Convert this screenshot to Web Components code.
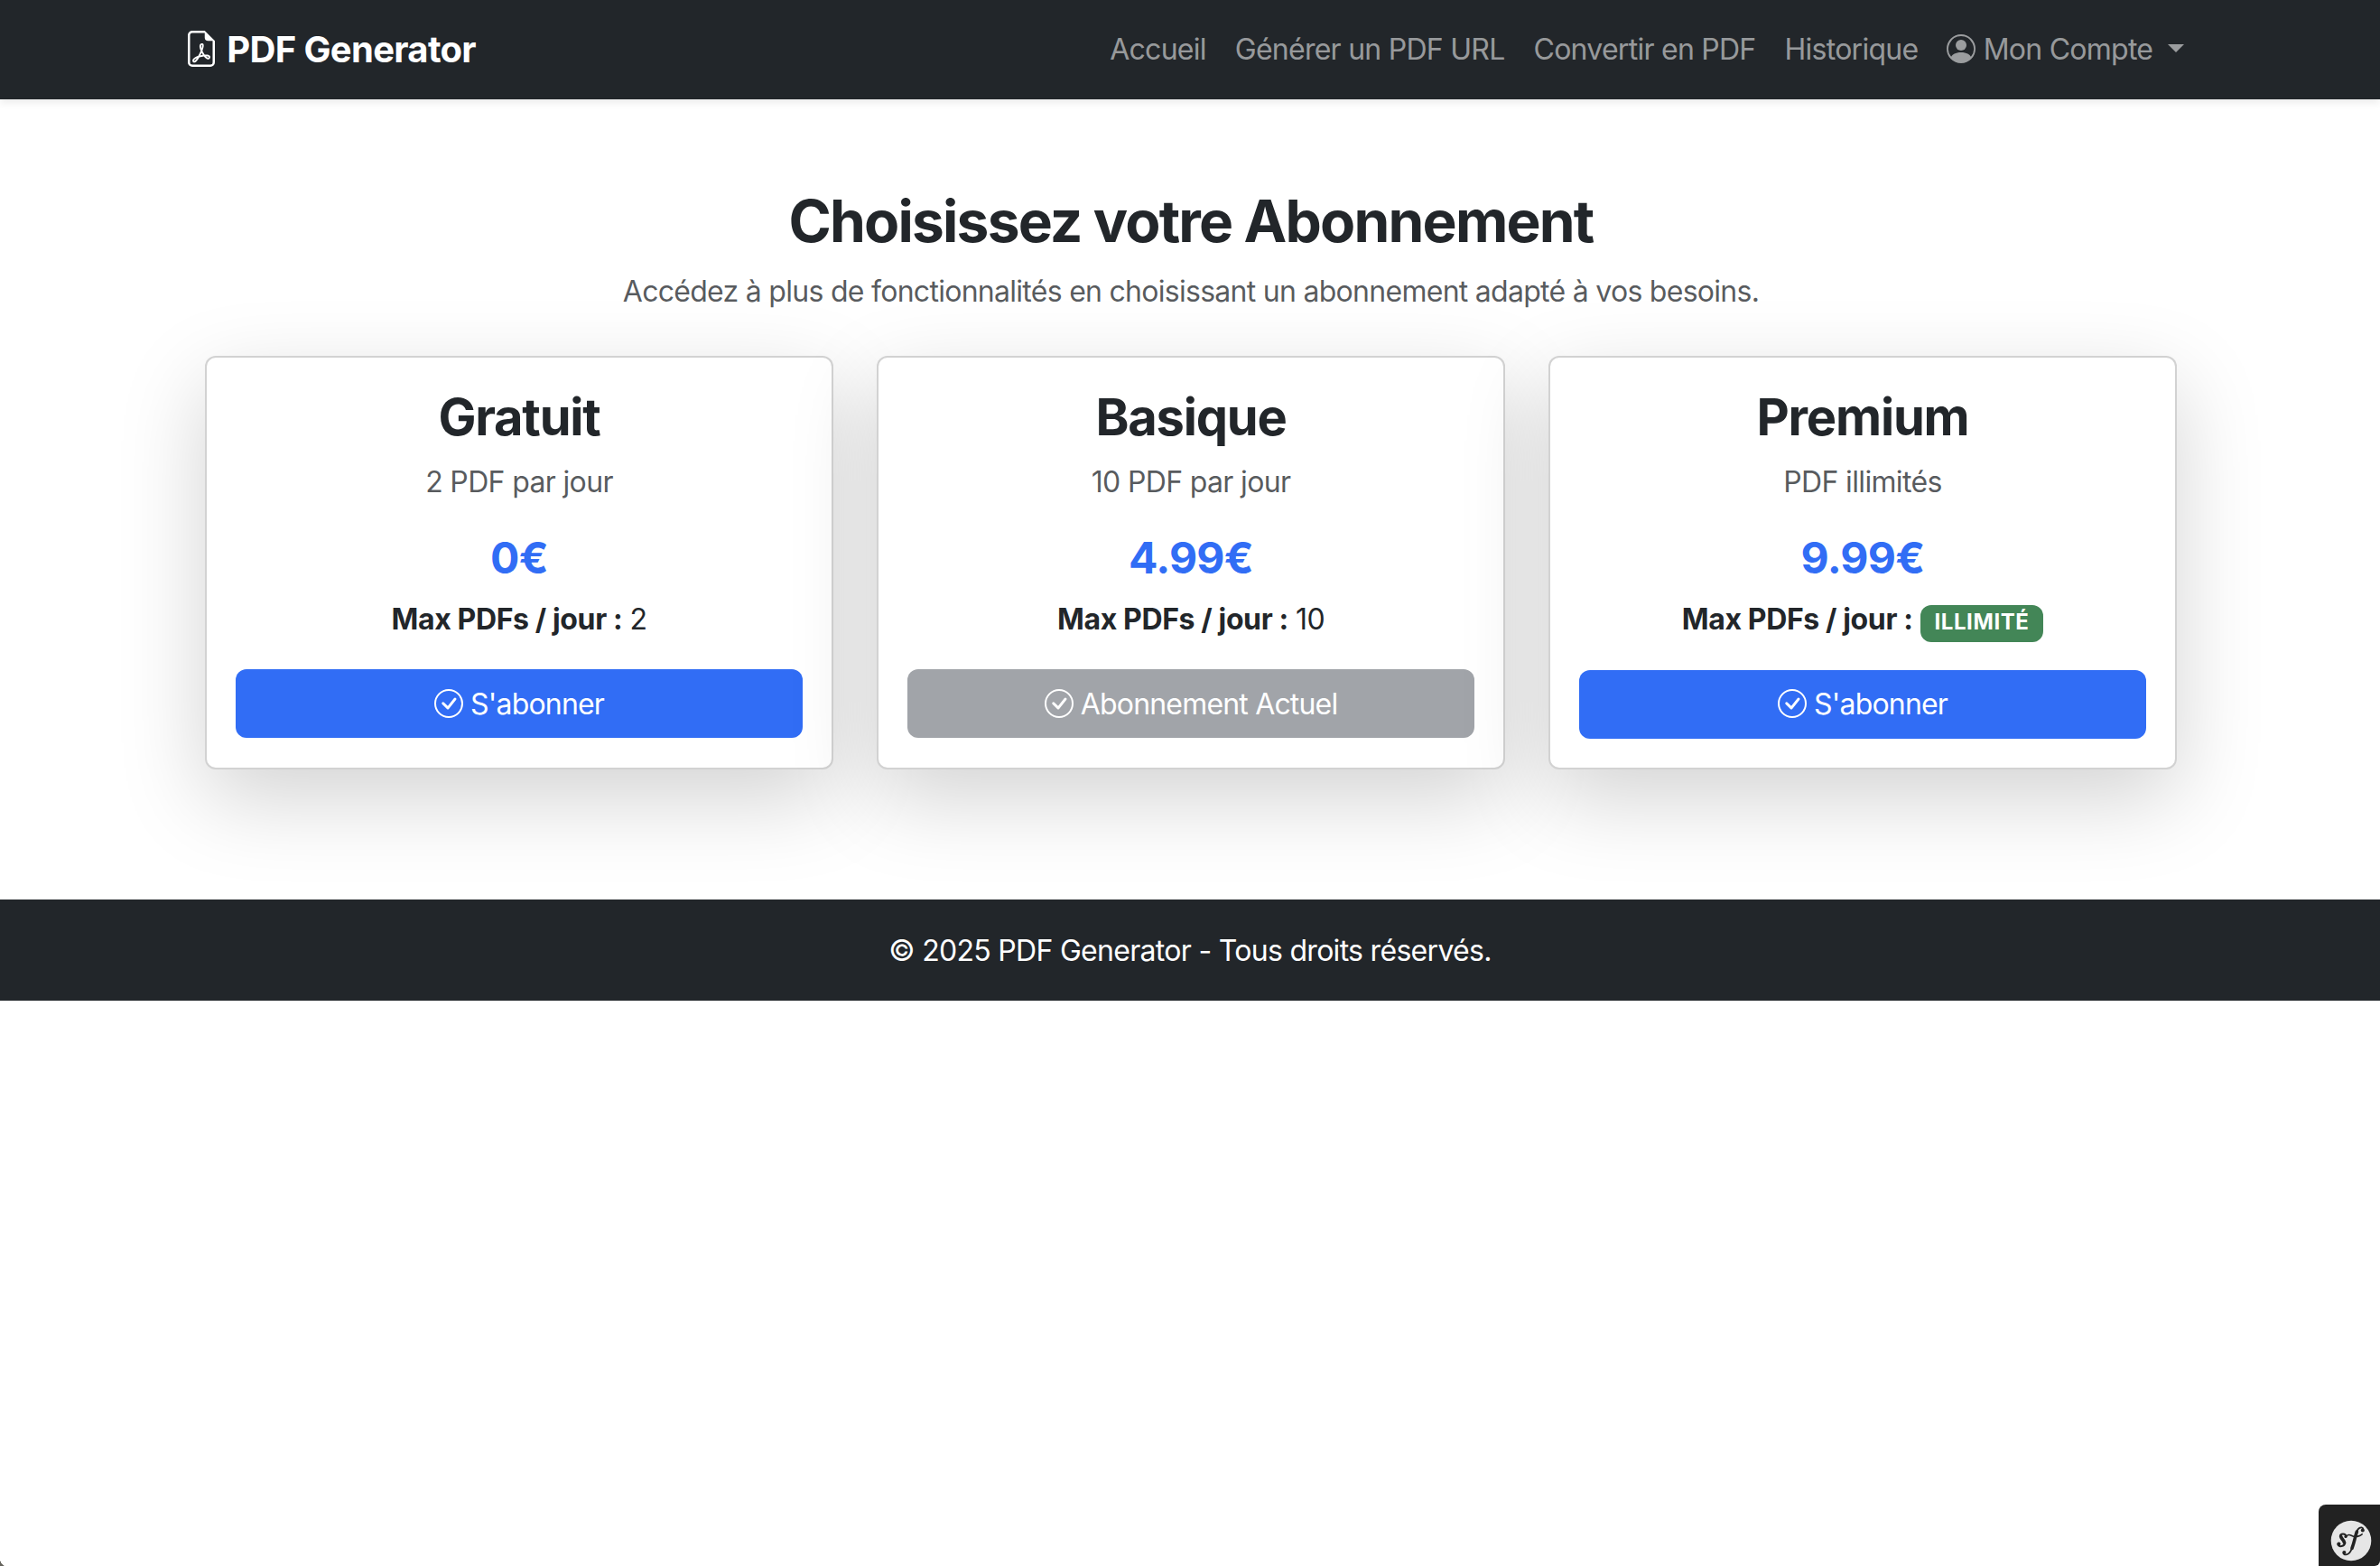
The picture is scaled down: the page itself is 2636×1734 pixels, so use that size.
<!DOCTYPE html>
<html lang="fr">
<head>
<meta charset="utf-8">
<title>PDF Generator - Abonnements</title>
<style>
	body {
		margin: 0;
		background: #fff;
		color: #22262a;
		font-family: Inter, "Liberation Sans", sans-serif;
		font-size: 32px;
		line-height: 1.5;
		letter-spacing: -0.72px;
	}
</style>
</head>
<body>

<app-navbar>
	<span slot="brand">PDF Generator</span>
	<nav-link>Accueil</nav-link>
	<nav-link>Générer un PDF URL</nav-link>
	<nav-link>Convertir en PDF</nav-link>
	<nav-link>Historique</nav-link>
	<nav-link icon="person-circle" dropdown>Mon Compte</nav-link>
</app-navbar>

<plan-section>
	<span slot="title">Choisissez votre Abonnement</span>
	<span slot="lead">Accédez à plus de fonctionnalités en choisissant un abonnement adapté à vos besoins.</span>

	<plan-card name="Gratuit" price="0€">
		<span slot="description">2 PDF par jour</span>
		<span slot="quota">2</span>
		<plan-button slot="action">S'abonner</plan-button>
	</plan-card>
	<plan-card name="Basique" price="4.99€">
		<span slot="description">10 PDF par jour</span>
		<span slot="quota">10</span>
		<plan-button slot="action" disabled>Abonnement Actuel</plan-button>
	</plan-card>
	<plan-card name="Premium" price="9.99€">
		<span slot="description">PDF illimités</span>
		<plan-badge slot="quota">ILLIMITÉ</plan-badge>
		<plan-button slot="action">S'abonner</plan-button>
	</plan-card>
</plan-section>

<app-footer>© 2025 PDF Generator - Tous droits réservés.</app-footer>

<debug-toolbar></debug-toolbar>

<script>
const ICONS = {
	'file-pdf': `
		<path d="M14 14V4.5L9.5 0H4a2 2 0 0 0-2 2v12a2 2 0 0 0 2 2h8a2 2 0 0 0 2-2M9.5 3A1.5 1.5 0 0 0 11 4.5h2V14a1 1 0 0 1-1 1H4a1 1 0 0 1-1-1V2a1 1 0 0 1 1-1h5.5z"/>
		<path d="M4.603 14.087a.8.8 0 0 1-.438-.42c-.195-.388-.13-.776.08-1.102.198-.307.526-.568.897-.787a7.7 7.7 0 0 1 1.482-.645 20 20 0 0 0 1.062-2.227 7.3 7.3 0 0 1-.43-1.295c-.086-.4-.119-.796-.046-1.136.075-.354.274-.672.65-.823.192-.077.4-.12.602-.077a.7.7 0 0 1 .477.365c.088.164.12.356.127.538.007.188-.012.396-.047.614-.084.51-.27 1.134-.52 1.794a11 11 0 0 0 .98 1.686 5.8 5.8 0 0 1 1.334.05c.364.066.734.195.96.465.12.144.193.32.2.518.007.192-.047.382-.138.563a1.04 1.04 0 0 1-.354.416.86.86 0 0 1-.51.138c-.331-.014-.654-.196-.933-.417a5.7 5.7 0 0 1-.911-.95 11.7 11.7 0 0 0-1.997.406 11.3 11.3 0 0 1-1.02 1.51c-.292.35-.609.656-.927.787a.8.8 0 0 1-.58.029m1.379-1.901q-.25.115-.459.238c-.328.194-.541.383-.647.547-.094.145-.096.25-.04.361q.016.032.026.044l.035-.012c.137-.056.355-.235.635-.572a8 8 0 0 0 .45-.606m1.64-1.33a13 13 0 0 1 1.01-.193 12 12 0 0 1-.51-.858 21 21 0 0 1-.5 1.05zm2.446.45q.226.245.435.41c.24.19.407.253.498.256a.1.1 0 0 0 .07-.015.3.3 0 0 0 .094-.125.44.44 0 0 0 .059-.2.1.1 0 0 0-.026-.063c-.052-.062-.2-.152-.518-.209a4 4 0 0 0-.612-.053zM8.078 7.8a7 7 0 0 0 .2-.828q.046-.282.038-.465a.6.6 0 0 0-.032-.198.5.5 0 0 0-.145.04c-.087.035-.158.106-.196.283-.04.192-.03.469.046.822q.036.167.09.346z"/>`,
	'person-circle': `
		<path d="M11 6a3 3 0 1 1-6 0 3 3 0 0 1 6 0"/>
		<path fill-rule="evenodd" d="M0 8a8 8 0 1 1 16 0A8 8 0 0 1 0 8m8-7a7 7 0 0 0-5.468 11.37C3.242 11.226 4.805 10 8 10s4.757 1.225 5.468 2.37A7 7 0 0 0 8 1"/>`,
	'check-circle': `
		<path d="M8 15A7 7 0 1 1 8 1a7 7 0 0 1 0 14m0 1A8 8 0 1 0 8 0a8 8 0 0 0 0 16"/>
		<path d="M10.97 4.97a.235.235 0 0 0-.02.022L7.477 9.417 5.384 7.323a.75.75 0 0 0-1.06 1.06L6.97 11.03a.75.75 0 0 0 1.079-.02l3.992-4.99a.75.75 0 0 0-1.071-1.05z"/>`
};

class BsIcon extends HTMLElement {
	constructor() {
		super();
		this.attachShadow({ mode: 'open' });
	}

	connectedCallback() {
		this.shadowRoot.innerHTML = `
		<style>
			:host {
				display: inline-block;
				width: 1em;
				height: 1em;
				line-height: 1;
				vertical-align: -0.125em;
			}

			svg {
				display: block;
				width: 100%;
				height: 100%;
			}
		</style>
		<svg viewBox="0 0 16 16" fill="currentColor">${ICONS[this.getAttribute('name')]}</svg>
	`;
	}
}

class NavLink extends HTMLElement {
	constructor() {
		super();
		this.attachShadow({ mode: 'open' });
	}

	connectedCallback() {
		const icon = this.getAttribute('icon');
		this.shadowRoot.innerHTML = `
		<style>
			:host {
				display: block;
				padding: 16px;
				color: rgba(255, 255, 255, .55);
				letter-spacing: -0.74px;
				white-space: nowrap;
			}

			:host([dropdown])::after {
				content: "";
				display: inline-block;
				margin-left: 8px;
				vertical-align: 8px;
				border-top: 9.6px solid;
				border-left: 9.6px solid transparent;
				border-right: 9.6px solid transparent;
			}
		</style>
		${icon ? `<bs-icon name="${icon}"></bs-icon> ` : ''}<slot></slot>
	`;
	}
}

class AppNavbar extends HTMLElement {
	constructor() {
		super();
		this.attachShadow({ mode: 'open' });

		this.shadowRoot.innerHTML = `
		<style>
			:host {
				display: block;
				background: #22262a;
				box-shadow: 0 4px 8px rgba(0, 0, 0, .075);
			}

			.Container {
				display: flex;
				align-items: center;
				justify-content: space-between;
				width: 2232px;
				height: 110px;
				margin: 0 auto;
				padding-left: 1px;
			}

			.Brand {
				color: #fff;
				font-size: 40px;
				font-weight: 700;
				letter-spacing: -0.67px;
				line-height: 1.45;
			}

			nav {
				display: flex;
			}
		</style>

		<div class="Container">
			<div class="Brand"><bs-icon name="file-pdf"></bs-icon> <slot name="brand"></slot></div>
			<nav><slot></slot></nav>
		</div>
	`;
	}
}

class PlanSection extends HTMLElement {
	constructor() {
		super();
		this.attachShadow({ mode: 'open' });

		this.shadowRoot.innerHTML = `
		<style>
			:host {
				display: block;
				width: 2184px;
				margin: 0 auto;
				padding: 97px 0 144px 2px;
				text-align: center;
			}

			h2 {
				margin: 0 0 15px;
				font-size: 64px;
				font-weight: 700;
				line-height: 1.2;
				letter-spacing: -1.82px;
			}

			p {
				margin: 0 0 47px;
				color: rgba(33, 37, 41, .75);
			}

			.Plans {
				display: grid;
				grid-template-columns: repeat(3, 1fr);
				gap: 48px;
			}
		</style>

		<h2><slot name="title"></slot></h2>
		<p><slot name="lead"></slot></p>
		<div class="Plans"><slot></slot></div>
	`;
	}
}

class PlanCard extends HTMLElement {
	constructor() {
		super();
		this.attachShadow({ mode: 'open' });
	}

	connectedCallback() {
		this.shadowRoot.innerHTML = `
		<style>
			:host {
				display: block;
				box-sizing: border-box;
				padding: 33px 32px 32px;
				background: #fff;
				border: 2px solid rgba(0, 0, 0, .175);
				border-radius: 12px;
				box-shadow: 0 32px 96px rgba(0, 0, 0, .175);
			}

			h3, h4, p {
				margin: 0;
			}

			h3 {
				margin-bottom: 14.5px;
				font-size: 56px;
				font-weight: 700;
				line-height: 1.2;
				letter-spacing: -1.2px;
			}

			h4 {
				margin: 31px 0 15px;
				color: #316df5;
				font-size: 48px;
				font-weight: 700;
				line-height: 1.2;
			}

			.Description {
				color: rgba(33, 37, 41, .75);
				letter-spacing: -0.65px;
			}

			.Quota {
				margin-bottom: 31px;
			}

			strong {
				font-weight: 700;
				letter-spacing: -0.38px;
			}
		</style>

		<h3>${this.getAttribute('name')}</h3>
		<p class="Description"><slot name="description"></slot></p>
		<h4>${this.getAttribute('price')}</h4>
		<p class="Quota"><strong>Max PDFs / jour :</strong> <slot name="quota"></slot></p>
		<slot name="action"></slot>
	`;
	}
}

class PlanBadge extends HTMLElement {
	constructor() {
		super();
		this.attachShadow({ mode: 'open' });

		this.shadowRoot.innerHTML = `
		<style>
			:host {
				display: inline-block;
				padding: 7.4px 15.6px 9.6px;
				border-radius: 12px;
				background: #438657;
				color: #fff;
				font-size: 24px;
				font-weight: 700;
				line-height: 1;
				letter-spacing: .6px;
			}
		</style>
		<slot></slot>
	`;
	}
}

class PlanButton extends HTMLElement {
	constructor() {
		super();
		this.attachShadow({ mode: 'open' });

		this.shadowRoot.innerHTML = `
		<style>
			:host {
				display: block;
				padding: 14.5px 26px 13.5px;
				border-radius: 12px;
				background: #316df5;
				color: #fff;
				letter-spacing: -0.82px;
			}

			:host([disabled]) {
				background: #a1a4a9;
			}
		</style>
		<bs-icon name="check-circle"></bs-icon> <slot></slot>
	`;
	}
}

class AppFooter extends HTMLElement {
	constructor() {
		super();
		this.attachShadow({ mode: 'open' });

		this.shadowRoot.innerHTML = `
		<style>
			:host {
				display: block;
				padding: 33px 0 31px;
				background: #22262a;
				color: #fff;
				letter-spacing: -0.7px;
				text-align: center;
			}
		</style>
		<slot></slot>
	`;
	}
}

class DebugToolbar extends HTMLElement {
	constructor() {
		super();
		this.attachShadow({ mode: 'open' });

		this.shadowRoot.innerHTML = `
		<style>
			:host {
				position: fixed;
				right: 0;
				bottom: 0;
				width: 68px;
				height: 68px;
				border-radius: 8px 0 6px 0;
				background: #222;
			}

			svg {
				display: block;
			}

			/* rounded corner of the window */
			.Corner {
				position: fixed;
				left: 0;
				bottom: 0;
				width: 6px;
				height: 8px;
				background: radial-gradient(ellipse 6px 8px at 100% 0, transparent 96%, #67655f 100%);
			}
		</style>
		<svg width="68" height="68" viewBox="0 0 68 68" fill="none" stroke="#222" stroke-linecap="round">
			<circle cx="36" cy="40" r="22.3" fill="#e6e6e6" stroke="none"/>
			<path stroke-width="1.8" d="M49.2 28.2C50 25 46 24.4 43.6 27.4C41.8 29.8 41 33 40.2 36M36.6 49C35.4 52.6 33.4 55 30.6 55.4C28.4 55.7 27 54.4 27.6 52.8"/>
			<path stroke-width="3.6" d="M42.4 30C40.6 34.6 39.6 41.6 37 48.4"/>
			<path stroke-width="1.6" d="M31 34.8C34.4 30.8 36.4 36.2 41 35.6C44.4 35.2 46.6 34.8 48.2 32.8"/>
			<path stroke-width="2" d="M30.4 35.4C30 31.6 24 31.8 23.8 35.2M29.4 42.2C28.8 46.8 22.2 47.4 21.4 43.8"/>
			<path stroke-width="3.6" d="M24.8 35.6C25.2 38 28.4 39.4 28.4 42.2"/>
			<g fill="#222" stroke="none">
				<circle cx="48.8" cy="28.6" r="2"/>
				<circle cx="28.4" cy="53" r="2"/>
				<circle cx="22.4" cy="43.6" r="2"/>
				<circle cx="30" cy="35.4" r="1.6"/>
			</g>
		</svg>
		<div class="Corner"></div>
	`;
	}
}

customElements.define('bs-icon', BsIcon);
customElements.define('nav-link', NavLink);
customElements.define('app-navbar', AppNavbar);
customElements.define('plan-section', PlanSection);
customElements.define('plan-card', PlanCard);
customElements.define('plan-badge', PlanBadge);
customElements.define('plan-button', PlanButton);
customElements.define('app-footer', AppFooter);
customElements.define('debug-toolbar', DebugToolbar);
</script>
</body>
</html>
